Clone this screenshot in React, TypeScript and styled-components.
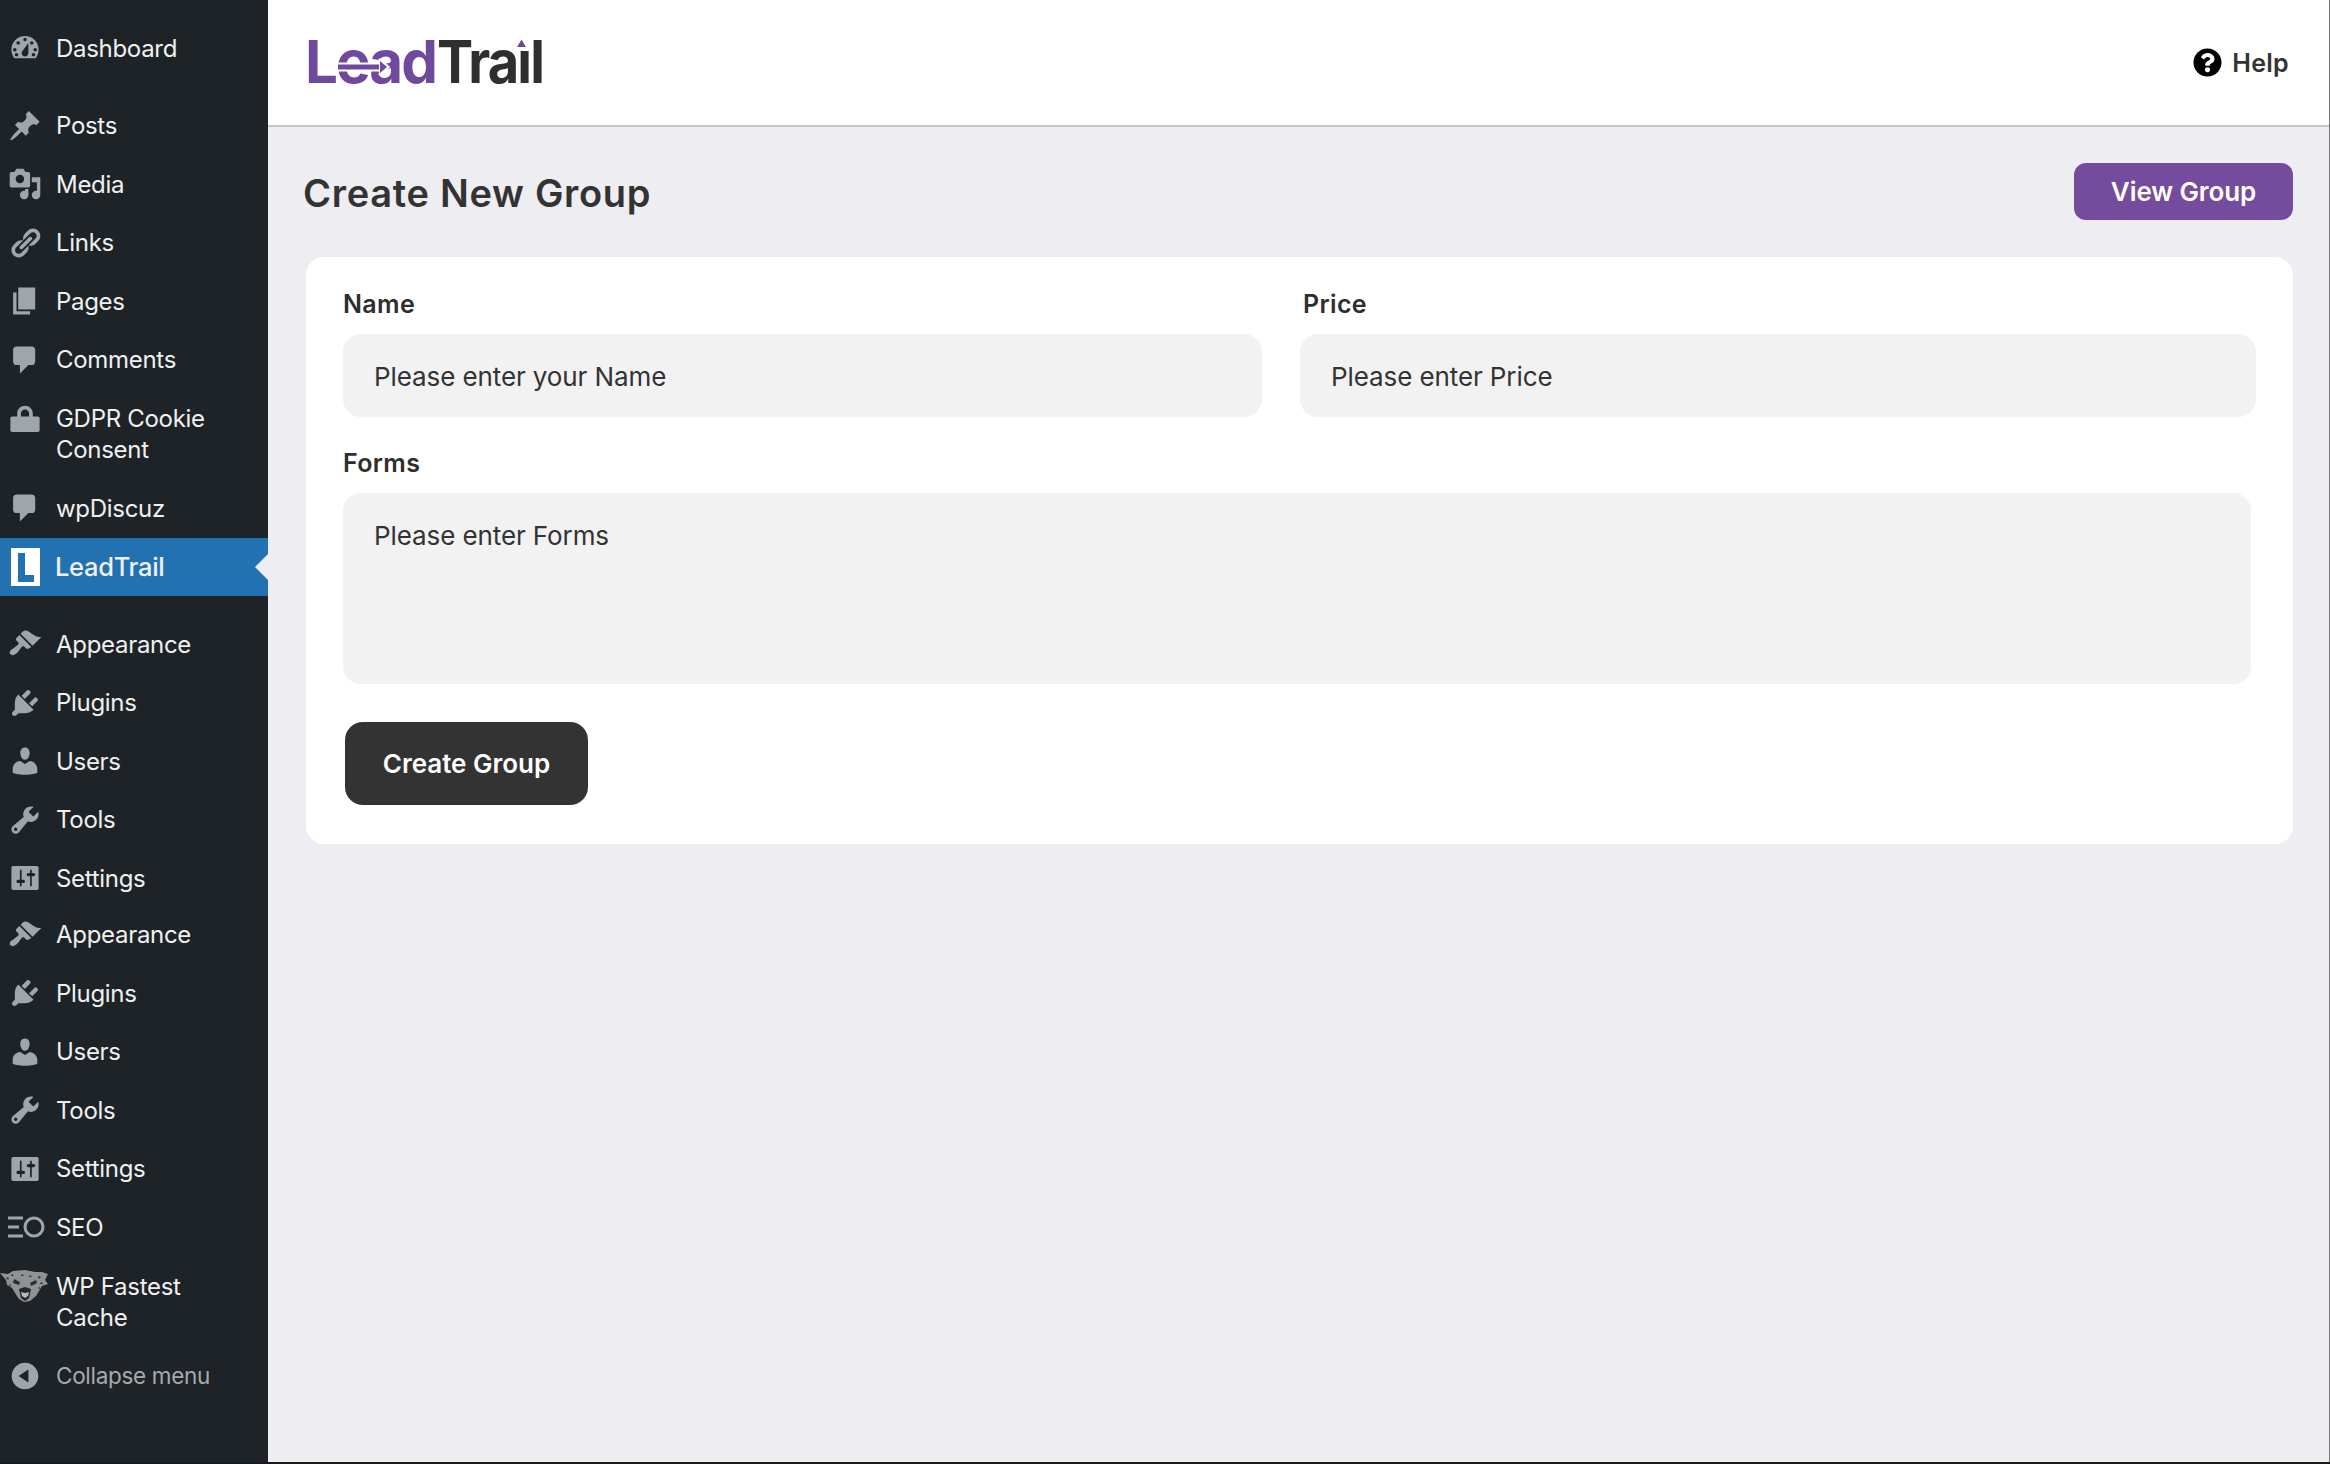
import React from 'react';
import styled, { createGlobalStyle } from 'styled-components';
import { FaQuestionCircle } from 'react-icons/fa';

const Global = createGlobalStyle`
  html, body { margin: 0; padding: 0; background: #eeedf2; }
  * { box-sizing: border-box; }
`;

const Shell = styled.div`
  display: flex;
  width: 2330px;
  height: 1464px;
  overflow: hidden;
  font-family: Inter, "Liberation Sans", sans-serif;
  border-bottom: 2px solid #1a1a1a;
`;

const Sidebar = styled.nav`
  flex: 0 0 268px;
  background: #1d2327;
  padding-top: 19px;
  display: flex;
  flex-direction: column;
`;

const Row = styled.div<{ $active?: boolean; $tall?: boolean; $top?: number; $muted?: boolean }>`
  position: relative;
  display: flex;
  align-items: ${p => (p.$tall ? 'flex-start' : 'center')};
  height: ${p => (p.$tall ? '90px' : '58.5px')};
  margin-top: ${p => p.$top ?? 0}px;
  padding-top: ${p => (p.$tall ? '14px' : '0')};
  padding-left: 8px;
  gap: 14px;
  background: ${p => (p.$active ? '#2271b1' : 'transparent')};
  color: ${p => (p.$muted ? '#a7aaad' : '#f0f0f1')};
  font-size: ${p => (p.$muted ? '22.5px' : p.$active ? '25.5px' : '24px')};
  line-height: 31px;
  font-weight: ${p => (p.$active ? 500 : 400)};
  letter-spacing: ${p => (p.$active ? '-0.3px' : '-0.3px')};
`;

const Notch = styled.span`
  position: absolute;
  right: 0;
  top: 50%;
  margin-top: -13px;
  border-style: solid;
  border-width: 13px 13px 13px 0;
  border-color: transparent #eeedf2 transparent transparent;
`;

const IconSvg = styled.svg`
  flex: 0 0 34px;
  width: 34px;
  height: 34px;
  fill: #a0a5aa;
`;

const LeadIcon = styled.span`
  flex: 0 0 34px;
  display: flex;
  justify-content: center;
  margin-right: -1px;
`;

const RowLabel = styled.span`
  display: block;
  width: 190px;
`;

const Main = styled.main`
  flex: 1;
  display: flex;
  flex-direction: column;
  background: #eeedf2;
  border-right: 1px solid #77777c;
`;

const TopBar = styled.header`
  flex: 0 0 127px;
  display: flex;
  align-items: center;
  justify-content: space-between;
  background: #fff;
  border-bottom: 2px solid #c6c6c8;
  padding: 0 40px 0 38px;
`;

const HelpLink = styled.div`
  display: flex;
  align-items: center;
  gap: 10px;
  font-size: 25px;
  font-weight: 600;
  color: #333;
  letter-spacing: 0.3px;
  svg { color: #000; }
`;

const Content = styled.div`
  padding: 36px 36px 0 35px;
`;

const TitleRow = styled.div`
  display: flex;
  align-items: center;
  justify-content: space-between;
`;

const Title = styled.h1`
  margin: 3px 0 0;
  font-size: 38px;
  font-weight: 600;
  line-height: 54px;
  color: #333;
  letter-spacing: 0.7px;
`;

const ViewButton = styled.button`
  width: 219px;
  height: 57px;
  border: 0;
  border-radius: 12px;
  background: #744b9d;
  color: #fff;
  font: 600 26px Inter, sans-serif;
  letter-spacing: -0.1px;
`;

const Card = styled.section`
  margin: 37px 0 0 3px;
  padding: 30px 37px 39px;
  background: #fff;
  border-radius: 18px;
`;

const FieldGrid = styled.div`
  display: grid;
  grid-template-columns: 919px 1fr;
  column-gap: 38px;
`;

const Field = styled.div<{ $labelShift?: number }>`
  display: flex;
  flex-direction: column;
  label {
    padding-left: ${p => p.$labelShift ?? 0}px;
  }
`;

const Label = styled.label`
  font-size: 25px;
  font-weight: 600;
  line-height: 34px;
  color: #2e2e2e;
  margin-bottom: 13px;
  letter-spacing: 0.35px;
`;

const TextInput = styled.input`
  height: 83px;
  width: 100%;
  border: 0;
  outline: 0;
  border-radius: 18px;
  background: #f2f2f3;
  padding: 2px 31px 0;
  font: 400 26px Inter, sans-serif;
  letter-spacing: -0.1px;
  &::placeholder { color: #333; opacity: 1; }
`;

const FormsField = styled.div`
  display: flex;
  flex-direction: column;
  margin-top: 29px;
  margin-right: 5px;
`;

const TextArea = styled.textarea`
  height: 191px;
  border: 0;
  outline: 0;
  resize: none;
  border-radius: 18px;
  background: #f2f2f3;
  padding: 26px 31px;
  font: 400 26px Inter, sans-serif;
  letter-spacing: -0.1px;
  line-height: 34px;
  &::placeholder { color: #333; opacity: 1; }
`;

const CreateButton = styled.button`
  display: block;
  width: 243px;
  height: 83px;
  margin: 38px 0 0 2px;
  border: 0;
  border-radius: 18px;
  background: #333;
  color: #fff;
  font: 600 26px Inter, sans-serif;
`;

const LogoSvg = styled.svg`
  overflow: visible;
  font-family: Inter, sans-serif;
  font-weight: 700;
  font-size: 59px;
  letter-spacing: -2px;
`;

const d = {
  dashboard: 'M3.76 16h12.48c1.1-1.37 1.76-3.11 1.76-5 0-4.42-3.58-8-8-8s-8 3.58-8 8c0 1.89.66 3.63 1.76 5zM10 4c.55 0 1 .45 1 1s-.45 1-1 1-1-.45-1-1 .45-1 1-1zM6 6c.55 0 1 .45 1 1s-.45 1-1 1-1-.45-1-1 .45-1 1-1zm8 0c.55 0 1 .45 1 1s-.45 1-1 1-1-.45-1-1 .45-1 1-1zm-5.37 5.55L12 7v6c0 1.1-.9 2-2 2s-2-.9-2-2c0-.57.24-1.08.63-1.45zM4 10c.55 0 1 .45 1 1s-.45 1-1 1-1-.45-1-1 .45-1 1-1zm12 0c.55 0 1 .45 1 1s-.45 1-1 1-1-.45-1-1 .45-1 1-1zM5 13c.55 0 1 .45 1 1s-.45 1-1 1-1-.45-1-1 .45-1 1-1zm10 0c.55 0 1 .45 1 1s-.45 1-1 1-1-.45-1-1 .45-1 1-1z',
  pin: 'M10.44 3.02l1.82-1.82 6.36 6.35-1.83 1.82c-1.05-.68-2.48-.57-3.41.36l-.75.75c-.92.93-1.04 2.35-.35 3.41l-1.83 1.82-2.41-2.41-2.8 2.79c-.42.42-3.38 2.71-3.8 2.29s1.86-3.39 2.28-3.81l2.79-2.79L4.1 9.36l1.83-1.82c1.05.69 2.48.57 3.4-.36l.75-.75c.93-.92 1.05-2.35.36-3.41z',
  media: 'M13 11V4c0-.55-.45-1-1-1h-1.67L9 1H5L3.67 3H2c-.55 0-1 .45-1 1v7c0 .55.45 1 1 1h10c.55 0 1-.45 1-1zM7 4.5c1.38 0 2.5 1.12 2.5 2.5S8.38 9.5 7 9.5 4.5 8.38 4.5 7 5.62 4.5 7 4.5zM14 6h5v10.5c0 1.38-1.12 2.5-2.5 2.5S14 17.88 14 16.5s1.12-2.5 2.5-2.5c.17 0 .34.02.5.05V9h-3V6zm-4 8.05V13h2v3.5c0 1.38-1.12 2.5-2.5 2.5S7 17.88 7 16.5 8.12 14 9.5 14c.17 0 .34.02.5.05z',
  links: 'M17.74 2.76c1.68 1.69 1.68 4.41 0 6.1l-1.53 1.52c-1.12 1.12-2.7 1.47-4.14 1.09l2.62-2.61.76-.77.76-.76c.84-.84.84-2.2 0-3.04-.84-.85-2.2-.85-3.04 0l-.77.76-3.38 3.38c-.37-1.44-.02-3.02 1.1-4.14l1.52-1.53c1.69-1.68 4.42-1.68 6.1 0zM8.59 13.43l5.34-5.34c.42-.42.42-1.1 0-1.52-.44-.43-1.13-.39-1.53 0l-5.33 5.34c-.42.42-.42 1.1 0 1.52.44.43 1.13.39 1.52 0zm-.76 2.29l4.14-4.15c.38 1.44.03 3.02-1.09 4.14l-1.52 1.53c-1.69 1.68-4.41 1.68-6.1 0-1.68-1.68-1.68-4.42 0-6.1l1.53-1.52c1.12-1.12 2.7-1.47 4.14-1.1l-4.14 4.15c-.85.84-.85 2.2 0 3.05.84.84 2.2.84 3.04 0z',
  pages: 'M6 15V2h10v13H6zm-1 1h8v2H3V5h2v11z',
  comment: 'M5 2h9c1.1 0 2 .9 2 2v7c0 1.1-.9 2-2 2h-2l-5 5v-5H5c-1.1 0-2-.9-2-2V4c0-1.1.9-2 2-2z',
  lock: 'M14.6 8H17.6c.55 0 1 .45 1 1v7c0 .55-.45 1-1 1H2.4c-.55 0-1-.45-1-1V9c0-.55.45-1 1-1H5.4V6.2C5.4 3.6 7.4 1.6 10 1.6s4.6 2 4.6 4.6V8zM12.4 8V6.2C12.4 4.9 11.3 3.8 10 3.8S7.6 4.9 7.6 6.2V8h4.8z',
  brush: 'M14.48 11.06L7.41 3.99l1.5-1.5c.5-.56 2.3-.47 3.51.32 1.21.8 1.43 1.28 2.91 2.1 1.18.64 2.45 1.26 4.45.85zm-.71.71L6.7 4.7 4.93 6.47c-.39.39-.39 1.02 0 1.41l1.06 1.06c.39.39.39 1.03 0 1.42-.6.6-1.43 1.11-2.21 1.69-.35.26-.7.53-1.01.84C1.43 13.23.4 14.98 1.5 16.09c1.11 1.1 2.85.07 4.19-1.27.31-.31.58-.66.84-1.01.58-.78 1.09-1.61 1.69-2.21.39-.39 1.02-.39 1.41 0l1.06 1.06c.39.39 1.02.39 1.41 0z',
  plug: 'M13.11 4.36L9.87 7.6 8 5.73l3.24-3.24c.35-.34 1.05-.2 1.56.32.52.51.66 1.21.31 1.55zm-8 1.77l.91-1.12 9.01 9.01-1.19.84c-.71.71-2.63 1.16-3.82 1.16H6.14L4.9 17.26c-.59.59-1.54.59-2.12 0-.59-.58-.59-1.53 0-2.12l1.24-1.24v-3.88c0-1.13.4-3.19 1.09-3.89zm7.26 3.97l3.24-3.24c.34-.35 1.04-.21 1.55.31.52.51.66 1.21.31 1.55l-3.24 3.25z',
  user: 'M10 9.25c-2.27 0-2.73-3.44-2.73-3.44C7 4.02 7.82 2 9.97 2c2.16 0 2.98 2.02 2.71 3.81 0 0-.41 3.44-2.68 3.44zm0 2.57L12.72 10c2.39 0 4.52 2.33 4.52 4.53v2.49s-3.65 1.13-7.24 1.13c-3.65 0-7.24-1.13-7.24-1.13v-2.49c0-2.25 1.94-4.48 4.47-4.48z',
  wrench: 'M16.68 9.77c-1.34 1.34-3.3 1.67-4.95.99l-5.41 6.52c-.99.99-2.59.99-3.58 0s-.99-2.59 0-3.57l6.52-5.42c-.68-1.65-.35-3.61.99-4.95 1.28-1.28 3.12-1.62 4.72-1.06l-2.89 2.89 2.82 2.82 2.86-2.87c.53 1.58.18 3.39-1.08 4.65zM3.81 16.21c.4.39 1.04.39 1.43 0 .4-.4.4-1.04 0-1.43-.39-.4-1.03-.4-1.43 0-.39.39-.39 1.03 0 1.43z',
  settings: 'M18 16V4c0-.55-.45-1-1-1H3c-.55 0-1 .45-1 1v12c0 .55.45 1 1 1h14c.55 0 1-.45 1-1zM8 11h1c.55 0 1 .45 1 1s-.45 1-1 1H8v1.5c0 .28-.22.5-.5.5s-.5-.22-.5-.5V13H6c-.55 0-1-.45-1-1s.45-1 1-1h1V5.5c0-.28.22-.5.5-.5s.5.22.5.5V11zm5-2h-1c-.55 0-1-.45-1-1s.45-1 1-1h1V5.5c0-.28.22-.5.5-.5s.5.22.5.5V7h1c.55 0 1 .45 1 1s-.45 1-1 1h-1v5.5c0 .28-.22.5-.5.5s-.5-.22-.5-.5V9z',
  collapse: 'M10 2.16c4.33 0 7.84 3.51 7.84 7.84s-3.51 7.84-7.84 7.84S2.16 14.33 2.16 10 5.71 2.16 10 2.16zm2 11.72V6.12L6.18 9.97z',
};

const Icon = ({ path }: { path: string }) => (
  <IconSvg viewBox="0 0 20 20"><path d={path} fillRule="evenodd" /></IconSvg>
);

const SeoIcon = () => (
  <IconSvg viewBox="0 0 34 34" style={{ overflow: 'visible' }}>
    <g fill="none" stroke="#a0a5aa" strokeWidth="3">
      <path d="M0 8h15M0 17h11M0 26h15" />
      <circle cx="26" cy="17" r="9" />
    </g>
  </IconSvg>
);

const CheetahIcon = () => (
  <IconSvg viewBox="0 0 34 34" style={{ overflow: 'visible' }}>
    <path d="M-8 2l8 1 5-3 12-1 10 2 7 0 6 2-3 6 3 4-6 2-3 5-3 5-6 5-6 1-5-3-4-6-3-5-5-3-1-5z" fill="#8f9295" />
    <path d="M6 8l6 3-1 3-6-2zM28 9l-6 3 1 3 6-3z" fill="#2a2d30" />
    <path d="M11 18l6-2 6 2-2 9-4 3-4-3z" fill="#24272a" />
    <path d="M13 21l4 1 4-1-1 4-3 2-3-2z" fill="#b8babd" />
    <path d="M-2 6l3 1-1 2zM4 3l2 2-3 0zM30 5l3 1-2 2zM33 11l2 2-3 0zM14 3l2 2-3 0zM22 4l2 2-3 0zM1 13l2 1-1 2zM30 17l2-1 0 2z" fill="#2a2d30" />
  </IconSvg>
);

type Item = { label: string; path?: string; top?: number; tall?: boolean; custom?: React.ReactNode };
const items: Item[] = [
  { label: 'Dashboard', path: d.dashboard },
  { label: 'Posts', path: d.pin, top: 19 },
  { label: 'Media', path: d.media },
  { label: 'Links', path: d.links },
  { label: 'Pages', path: d.pages },
  { label: 'Comments', path: d.comment },
  { label: 'GDPR Cookie Consent', path: d.lock, tall: true },
  { label: 'wpDiscuz', path: d.comment },
];
const after: Item[] = [
  { label: 'Appearance', path: d.brush, top: 19 },
  { label: 'Plugins', path: d.plug },
  { label: 'Users', path: d.user },
  { label: 'Tools', path: d.wrench },
  { label: 'Settings', path: d.settings },
  { label: 'Appearance', path: d.brush, top: -2 },
  { label: 'Plugins', path: d.plug },
  { label: 'Users', path: d.user },
  { label: 'Tools', path: d.wrench },
  { label: 'Settings', path: d.settings },
  { label: 'SEO', custom: <SeoIcon /> },
  { label: 'WP Fastest Cache', custom: <CheetahIcon />, tall: true },
];

const MenuRow = ({ item }: { item: Item }) => (
  <Row $top={item.top} $tall={item.tall}>
    {item.custom ?? <Icon path={item.path as string} />}
    <RowLabel>{item.label}</RowLabel>
  </Row>
);

const Logo = () => (
  <LogoSvg width="240" height="50" viewBox="0 0 240 50">
    <text x="-1" y="45" fill="#6f4a9c" textLength="131" lengthAdjust="spacingAndGlyphs">Lead</text>
    <text x="131" y="45" fill="#2f2f2f" textLength="106" lengthAdjust="spacingAndGlyphs">Trail</text>
    <path d="M32 29h46" stroke="#fff" strokeWidth="9" />
    <path d="M32 29h44" stroke="#6f4a9c" strokeWidth="5" />
    <path d="M73 21l9 8-9 8" fill="#fff" stroke="#fff" strokeWidth="3" />
    <path d="M74 23l7 6-7 6z" fill="#6f4a9c" />
    <rect x="208" y="0" width="15" height="12" fill="#fff" />
    <path d="M215.5 1.5l4.5 7.5h-9z" fill="#6f4a9c" />
  </LogoSvg>
);

export default function App() {
  return (
    <>
      <Global />
      <Shell>
        <Sidebar>
          {items.map((it, i) => <MenuRow key={i} item={it} />)}
          <Row $active>
            <LeadIcon>
              <svg width="29" height="38" viewBox="0 0 29 38">
                <rect width="29" height="38" fill="#fff" />
                <path d="M7 5h7v22h9v7H7z" fill="#2271b1" />
              </svg>
            </LeadIcon>
            <RowLabel>LeadTrail</RowLabel>
            <Notch />
          </Row>
          {after.map((it, i) => <MenuRow key={i} item={it} />)}
          <Row $muted>
            <Icon path={d.collapse} />
            <RowLabel>Collapse menu</RowLabel>
          </Row>
        </Sidebar>
        <Main>
          <TopBar>
            <Logo />
            <HelpLink><FaQuestionCircle size={29} />Help</HelpLink>
          </TopBar>
          <Content>
            <TitleRow>
              <Title>Create New Group</Title>
              <ViewButton>View Group</ViewButton>
            </TitleRow>
            <Card>
              <FieldGrid>
                <Field>
                  <Label>Name</Label>
                  <TextInput placeholder="Please enter your Name" />
                </Field>
                <Field $labelShift={3}>
                  <Label>Price</Label>
                  <TextInput placeholder="Please enter Price" />
                </Field>
              </FieldGrid>
              <FormsField>
                <Label>Forms</Label>
                <TextArea placeholder="Please enter Forms" />
              </FormsField>
              <CreateButton>Create Group</CreateButton>
            </Card>
          </Content>
        </Main>
      </Shell>
    </>
  );
}
